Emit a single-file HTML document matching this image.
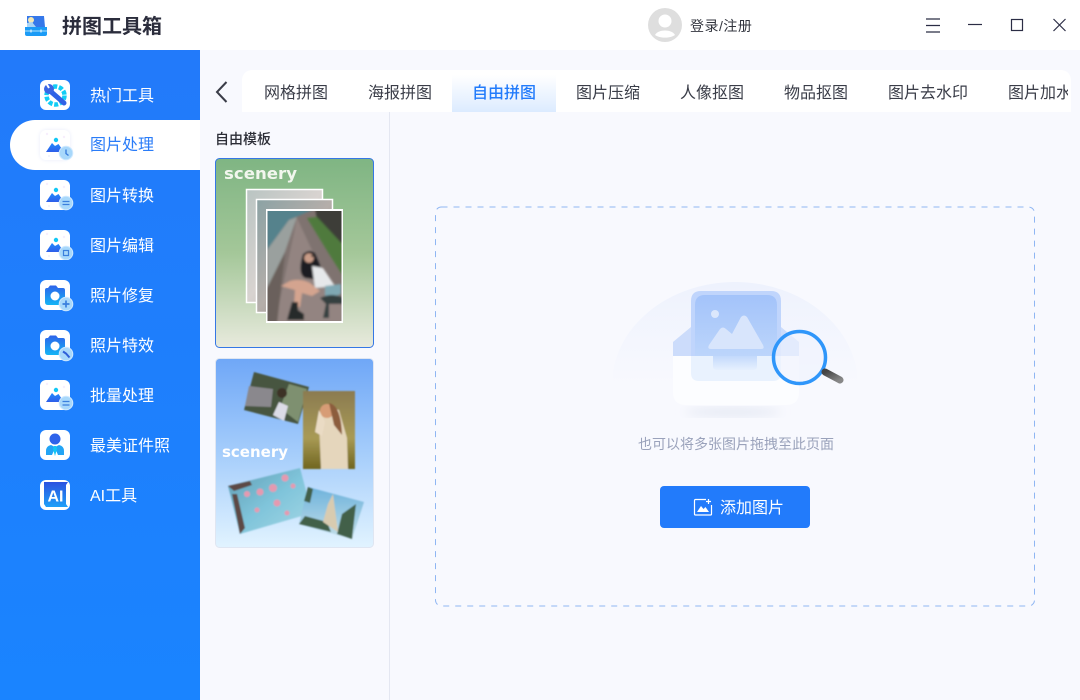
<!DOCTYPE html>
<html lang="zh"><head><meta charset="utf-8"><title>拼图工具箱</title>
<style>
*{box-sizing:border-box;margin:0;padding:0}
html,body{width:1080px;height:700px;overflow:hidden;background:#f8f9fe;font-family:"Liberation Sans","Noto Sans CJK SC",sans-serif}
.a{position:absolute}
.t{position:absolute;white-space:nowrap;line-height:24px}
#hd{left:0;top:0;width:1080px;height:50px;background:#fff}
#sb{left:0;top:50px;width:200px;height:650px;background:linear-gradient(#227afa,#1a84ff)}
#pill{left:10px;top:120px;width:190px;height:50px;background:#fff;border-radius:25px 0 0 25px}
.i{position:absolute;left:40px;width:30px;height:30px;background:#fff;border-radius:6px}
.n{position:absolute;left:90px;font-size:16px;line-height:24px;color:#fff;white-space:nowrap}
#tabs{left:242px;top:70px;width:829px;height:42px;background:#fff;border-radius:10px 10px 0 0;overflow:hidden}
#act{left:210px;top:5px;width:104px;height:37px;background:linear-gradient(#fff,#dcebff)}
.tb{position:absolute;top:12px;font-size:16px;line-height:24px;color:#3a3d48;white-space:nowrap}
#btn{left:660px;top:486px;width:150px;height:42px;background:#227bfb;border-radius:4px}
</style></head><body>
<div class="a" id="hd"></div>
<svg class="a" style="left:24px;top:15px" width="24" height="22" viewBox="0 0 24 22">
<path d="M3 1h17l1 11H3z" fill="#3578ea"/><circle cx="7" cy="5" r="3" fill="#f4e8b4"/><path d="M3 12V8l5-1 4 5z" fill="#a9d4f5"/>
<path d="M1 12h22v7q0 2-2 2H3q-2 0-2-2z" fill="#1b9bf6"/><path d="M1 16h22" stroke="#8fd4fb" stroke-width="1.200"/><path d="M7 14.500v3M17 14.500v3" stroke="#fff"/></svg>
<div class="t" style="left:62px;top:15px;font-size:20px;font-weight:700;color:#2b2d3c">拼图工具箱</div>
<svg class="a" style="left:648px;top:8px" width="34" height="34" viewBox="0 0 34 34"><circle cx="17" cy="17" r="17" fill="#dedede"/><circle cx="17" cy="13" r="6.500" fill="#fff"/><path d="M7 27c3-6 17-6 20 0-5 3.500-15 3.500-20 0z" fill="#fff"/></svg>
<div class="t" style="left:690px;top:14px;font-size:14px;letter-spacing:.5px;color:#33363f">登录/注册</div>
<svg class="a" style="left:920px;top:14px" width="150" height="24" viewBox="0 0 150 24" fill="none" stroke="#2b2d45" stroke-width="1.200">
<path d="M6 5h14M6 11.500h14M6 18h14"/><path d="M48 10.500h14"/><rect x="91.500" y="5.500" width="11" height="11"/><path d="M133.500 5l12 12M145.500 5l-12 12"/></svg>

<div class="a" id="sb"></div>
<div class="a" id="pill"></div>
<!-- icons -->
<div class="i" style="top:80px"></div>
<svg class="a" style="left:40px;top:80px" width="30" height="30" viewBox="0 0 30 30"><circle cx="15.500" cy="15.500" r="9" fill="none" stroke="#12cdf5" stroke-width="4.500" stroke-dasharray="4 1.700"/><path d="M9 10l15 13" stroke="#2f62e6" stroke-width="5" stroke-linecap="round"/><circle cx="9" cy="9" r="5" fill="#3a66e4"/><path d="M6 3l3 5" stroke="#fff" stroke-width="2"/></svg>

<div class="i" style="top:130px;box-shadow:0 0 4px #e8ecfa"></div>
<div class="i" style="top:180px"></div>
<div class="i" style="top:230px"></div>
<svg class="a" style="left:40px;top:130px" width="34" height="130" viewBox="0 0 34 130">
<defs><linearGradient id="m" x1="0" y1="0" x2="0" y2="1"><stop offset="0" stop-color="#1f8bff"/><stop offset="1" stop-color="#2e5ee8"/></linearGradient>
<g id="mt"><circle cx="7" cy="4" r="1.200" fill="#f7eefc"/><circle cx="24" cy="7" r="1.200" fill="#f7eefc"/><circle cx="9" cy="26" r="1" fill="#eef0fc"/><circle cx="16" cy="10" r="2.200" fill="#12c8f5"/><path d="M6 22l6-9 3 3 3.500-2L24 22z" fill="url(#m)"/></g>
<g id="bd"><circle cx="26" cy="23" r="6.800" fill="#a8d8fb" stroke="#cfe9ff"/></g></defs>
<use href="#mt"/><use href="#bd"/><path d="M26 19.500v4l2.500 2" stroke="#3b7fdd" stroke-width="1.400" fill="none"/>
<g transform="translate(0,50)"><use href="#mt"/><use href="#bd"/><path d="M22.500 21.500h7M29.500 24.500h-7" stroke="#3b7fdd" stroke-width="1.200"/></g>
<g transform="translate(0,100)"><use href="#mt"/><use href="#bd"/><rect x="23.500" y="20.500" width="5" height="5" fill="none" stroke="#3b7fdd" stroke-width="1.200"/></g>
</svg>
<div class="i" style="top:280px"></div>
<div class="i" style="top:330px"></div>
<svg class="a" style="left:40px;top:280px" width="34" height="85" viewBox="0 0 34 85">
<defs><linearGradient id="c" x1="0" y1="0" x2="0" y2="1"><stop offset="0" stop-color="#2e63ea"/><stop offset="1" stop-color="#14b4f5"/></linearGradient></defs>
<path d="M5 10q0-2 2-2h1l2-2.500h6l2 2.500h5q2 0 2 2v12q0 3-3 3H8q-3 0-3-3z" fill="url(#c)"/><circle cx="15" cy="16" r="4.500" fill="#fff"/><circle cx="26" cy="24" r="6.800" fill="#a8d8fb" stroke="#cfe9ff"/><path d="M26 20.500v7M22.500 24h7" stroke="#3b7fdd" stroke-width="1.700"/>
<g transform="translate(0,50)"><path d="M5 10q0-2 2-2h1l2-2.500h6l2 2.500h5q2 0 2 2v12q0 3-3 3H8q-3 0-3-3z" fill="url(#c)"/><circle cx="15" cy="16" r="4.500" fill="#fff"/><circle cx="26" cy="24" r="6.800" fill="#a8d8fb" stroke="#cfe9ff"/><path d="M23 21.500l3 2 3.500 4" stroke="#2f5fd8" stroke-width="2" fill="none"/></g>
</svg>
<div class="i" style="top:380px"></div>
<svg class="a" style="left:40px;top:380px" width="34" height="34" viewBox="0 0 34 34"><circle cx="7" cy="4" r="1.200" fill="#f7eefc"/><circle cx="24" cy="7" r="1.200" fill="#f7eefc"/><circle cx="16" cy="10" r="2.200" fill="#12c8f5"/><path d="M6 22l6-9 3 3 3.500-2L24 22z" fill="url(#m)"/><circle cx="26" cy="23" r="6.800" fill="#a8d8fb" stroke="#cfe9ff"/><path d="M22.500 21.500h7M22.500 25h7" stroke="#3b7fdd" stroke-width="1.200"/></svg>
<div class="i" style="top:430px"></div>
<svg class="a" style="left:40px;top:430px" width="30" height="30" viewBox="0 0 30 30"><circle cx="15" cy="9" r="5.500" fill="#2e63ea"/><path d="M6 25v-4q0-5 5-6l4 2 4-2q5 1 5 6v4h-6l-3-7-3 7z" fill="#22a4f5"/><path d="M14 16h2l1 3-2 7-2-7z" fill="#12c8f5"/></svg>
<div class="i" style="top:480px"></div>
<svg class="a" style="left:40px;top:480px" width="30" height="30" viewBox="0 0 30 30"><defs><linearGradient id="ai" x1="0" y1="0" x2="0" y2="1"><stop offset="0" stop-color="#2b52e0"/><stop offset="1" stop-color="#1fa0f8"/></linearGradient></defs><path d="M4 2h24l-2 3v19l2 3H6l-2-3z" fill="url(#ai)"/><text x="15.500" y="21.700" text-anchor="middle" font-size="16" font-weight="700" fill="#fff" font-family="Liberation Sans">AI</text></svg>

<div class="n" style="top:85px">热门工具</div>
<div class="n" style="top:134px;color:#2a7cf8">图片处理</div>
<div class="n" style="top:185px">图片转换</div>
<div class="n" style="top:235px">图片编辑</div>
<div class="n" style="top:285px">照片修复</div>
<div class="n" style="top:335px">照片特效</div>
<div class="n" style="top:385px">批量处理</div>
<div class="n" style="top:435px">最美证件照</div>
<div class="n" style="top:485px">AI工具</div>

<!-- tabs -->
<svg class="a" style="left:212px;top:80px" width="20" height="24" viewBox="0 0 20 24"><path d="M14.500 2L5 12l9.500 10" fill="none" stroke="#3a3d48" stroke-width="2"/></svg>
<div class="a" id="tabs"><div class="a" id="act"></div>
<div class="tb" style="left:22px">网格拼图</div><div class="tb" style="left:126px">海报拼图</div>
<div class="tb" style="left:230px;color:#227bfb;font-weight:500">自由拼图</div><div class="tb" style="left:334px">图片压缩</div>
<div class="tb" style="left:438px">人像抠图</div><div class="tb" style="left:542px">物品抠图</div>
<div class="tb" style="left:646px">图片去水印</div><div class="tb" style="left:766px;width:60px;overflow:hidden">图片加水印</div></div>
<div class="a" style="left:389px;top:112px;width:1px;height:588px;background:#e4e7f1"></div>
<div class="t" style="left:215px;top:127px;font-size:14px;font-weight:500;color:#2b2d36">自由模板</div>

<!-- card 1 -->
<svg class="a" style="left:215px;top:158px" width="159" height="190" viewBox="0 0 159 190">
<defs><linearGradient id="g" x1="0" y1="0" x2="0" y2="1"><stop offset="0" stop-color="#7fb583"/><stop offset=".5" stop-color="#a4c799"/><stop offset="1" stop-color="#e8eadd"/></linearGradient>
<linearGradient id="bk" x1="0" y1="0" x2="1" y2="1"><stop offset="0" stop-color="#b9c4c2"/><stop offset=".5" stop-color="#d8d3d0"/><stop offset="1" stop-color="#b8b3b0"/></linearGradient>
<linearGradient id="bk2" x1="0" y1="0" x2="1" y2="1"><stop offset="0" stop-color="#8ba2a4"/><stop offset=".5" stop-color="#b5aeaa"/><stop offset="1" stop-color="#8d8785"/></linearGradient>
<filter id="b1"><feGaussianBlur stdDeviation="1"/></filter><clipPath id="pc"><rect x="52.500" y="53" width="74" height="110"/></clipPath></defs>
<rect x=".5" y=".5" width="158" height="189" rx="4" fill="url(#g)" stroke="#3577e5"/>
<text x="9" y="21" font-size="16" font-weight="700" fill="#f2f6ee" font-family="DejaVu Sans" textLength="73" lengthAdjust="spacingAndGlyphs">scenery</text>
<rect x="31.500" y="31.500" width="76" height="113" fill="url(#bk)" stroke="#fff" stroke-width="1.500"/>
<rect x="41.500" y="41.500" width="76" height="113" fill="url(#bk2)" stroke="#fff" stroke-width="1.500"/>
<rect x="51" y="51" width="77" height="114" fill="#fff"/>
<g clip-path="url(#pc)"><rect x="52" y="53" width="75" height="110" fill="#7f7370"/>
<g filter="url(#b1)">
<path d="M52 50h50L74 62 52 92z" fill="#55828c"/><path d="M52 92l22-30 8-3-12 35-18 40z" fill="#9aa09e"/>
<path d="M100 50h30v34l-10 4-18-26z" fill="#3c3e38"/><path d="M92 60l10-1 28 30v32l-16-25z" fill="#4f7a3d"/>
<path d="M82 60l14 30 32 60v16H60z" fill="#938481"/><path d="M50 134l20-40-8 72H50z" fill="#6b605c"/>
<path d="M90 120q-8-4-2-24 8-6 12 0l8 18-4 8z" fill="#1c1b22"/><circle cx="94" cy="100" r="4.800" fill="#c99c88"/><path d="M96 98h5" stroke="#222" stroke-width="1.500"/>
<path d="M97 108l11 2 12 18-20 2z" fill="#e6e8ea"/><path d="M75 123q10-3 20 2l10 8-8 5-10-3-2 14h-6l1-17-14-4z" fill="#d4a48f"/>
<path d="M110 128l16-2v10l-16 6z" fill="#7fa8b3"/><path d="M105 140q12-6 23 0v6h-14v14h-6l3-14z" fill="#35403f"/>
<path d="M77 144h6v8l6 4v6H72z" fill="#262a2a"/></g></g>
</svg>

<!-- card 2 -->
<svg class="a" style="left:215px;top:358px" width="159" height="190" viewBox="0 0 159 190">
<defs><linearGradient id="bg" x1="0" y1="0" x2="0" y2="1"><stop offset="0" stop-color="#6fa7f7"/><stop offset=".5" stop-color="#a5cdfb"/><stop offset="1" stop-color="#e1f3ff"/></linearGradient>
<linearGradient id="p2" x1="0" y1="0" x2="0" y2="1"><stop offset="0" stop-color="#8b7b50"/><stop offset=".6" stop-color="#a89a55"/><stop offset="1" stop-color="#70651f"/></linearGradient>
<linearGradient id="p3" x1="0" y1="0" x2="1" y2="1"><stop offset="0" stop-color="#5f9cb3"/><stop offset=".5" stop-color="#7fc4da"/><stop offset="1" stop-color="#a5d8e6"/></linearGradient>
<linearGradient id="p4" x1="0" y1="0" x2="0" y2="1"><stop offset="0" stop-color="#6db2dc"/><stop offset="1" stop-color="#c3dfe8"/></linearGradient>
<filter id="b2"><feGaussianBlur stdDeviation=".8"/></filter></defs>
<rect x=".5" y=".5" width="158" height="189" rx="4" fill="url(#bg)" stroke="#dfe6f2"/>
<g filter="url(#b2)">
<path d="M39 14l55 15-11 37-54-14z" fill="#46553f"/><path d="M34 28l24 3-2 18-26-1z" fill="#8a888d"/><path d="M65 50l9-24 18 5-9 33z" fill="#7e9070"/><path d="M58 57l6-13 9 4-4 15z" fill="#dcdce6"/><circle cx="67" cy="35" r="5" fill="#3e3328"/>
<rect x="88" y="33" width="52" height="78" fill="url(#p2)"/><path d="M104 64q6-18 20-12l8 28 1 31H106z" fill="#e5d6bc"/><circle cx="112" cy="53" r="7" fill="#d79c76"/><path d="M114 45q12 2 13 32l-8-10z" fill="#8c5d3c"/><path d="M100 74l4-22 6 12-3 14z" fill="#eadbc4"/>
<path d="M13 128l72-18 12 45-72 21z" fill="url(#p3)"/><path d="M13 128l22-5 2 4-18 6zM17 136l5 0 8 34-5 6z" fill="#5d4a45"/>
<g fill="#e49ab0"><circle cx="45" cy="134" r="3.500"/><circle cx="58" cy="130" r="4"/><circle cx="70" cy="120" r="3.500"/><circle cx="32" cy="136" r="3"/><circle cx="62" cy="145" r="3.500"/><circle cx="78" cy="128" r="2.500"/><circle cx="42" cy="152" r="2.500"/><circle cx="72" cy="155" r="2.500"/></g>
<path d="M93 129l56 15-12 37-53-15z" fill="url(#p4)"/><path d="M93 129l5 2-3 14-6-2zM84 166l6-8 22 6 4 10zM122 176l5-20 14-10-4 35z" fill="#43604a"/><path d="M108 164l5-18 5-10 5 38z" fill="#d8cbb0"/></g>
<text x="7" y="99" font-size="15" font-weight="700" fill="#fff" font-family="DejaVu Sans" textLength="66" lengthAdjust="spacingAndGlyphs">scenery</text>
</svg>

<!-- dashed -->
<svg class="a" style="left:434px;top:206px" width="602" height="401"><rect x="1.500" y="1" width="599" height="399" rx="6" fill="none" stroke="#8fb6f3" stroke-dasharray="6 6"/></svg>

<!-- illustration -->
<svg class="a" style="left:600px;top:270px" width="270" height="160" viewBox="0 0 270 160">
<defs><linearGradient id="d" x1="0" y1="0" x2="0" y2="1"><stop offset="0" stop-color="#eef2fd"/><stop offset="1" stop-color="#f8f9fe"/></linearGradient>
<linearGradient id="card" x1="0" y1="0" x2="0" y2="1"><stop offset="0" stop-color="#a3c3fa"/><stop offset="1" stop-color="#bcd5fb"/></linearGradient>
<linearGradient id="low" x1="0" y1="0" x2="0" y2="1"><stop offset="0" stop-color="#c3d9fc"/><stop offset="1" stop-color="#e6f0fe"/></linearGradient>
<linearGradient id="h" x1="0" y1="0" x2="1" y2="1"><stop offset="0" stop-color="#444"/><stop offset="1" stop-color="#888"/></linearGradient>
<filter id="s"><feGaussianBlur stdDeviation="5"/></filter></defs>
<path d="M12 115a123 103 0 0 1 246 0z" fill="url(#d)"/>
<ellipse cx="133" cy="142" rx="48" ry="5" fill="#e6eaf4" filter="url(#s)"/>
<path d="M73 72L91 57h90l18 15v14H73z" fill="#ccdcfb"/>
<path d="M73 86h126v36q0 13-13 13H86q-13 0-13-13z" fill="#fcfdff"/>
<path d="M91 31q0-10 10-10h70q10 0 10 10v55H91z" fill="#c0d5fc"/>
<path d="M91 86h90v17q0 8-8 8H99q-8 0-8-8z" fill="#e9f2fe"/>
<path d="M95 35q0-10 10-10h62q10 0 10 10v51H95z" fill="url(#card)"/>
<path d="M113 86h44v10q0 4-4 4h-36q-4 0-4-4z" fill="url(#low)"/>
<circle cx="115" cy="44" r="4" fill="#dbe7fc"/>
<path d="M109 75l11-16q3-3 6 0l6 5 9-17q3-3 6 0l16 28q2 4-2 4h-50q-4 0-2-4z" fill="#d8e5fc"/>
<circle cx="199.500" cy="87.500" r="26" fill="#eff3fd" fill-opacity=".65" stroke="#2f96fa" stroke-width="3.500"/>
<path d="M225 102l15 8" stroke="url(#h)" stroke-width="7" stroke-linecap="round"/>
</svg>

<div class="t" style="left:638px;top:432px;font-size:14px;color:#9aa2bb">也可以将多张图片拖拽至此页面</div>
<div class="a" id="btn"></div>
<svg class="a" style="left:693px;top:498px" width="20" height="18" viewBox="0 0 20 18"><path d="M13 1.500H2.500q-1 0-1 1V16q0 1 1 1h15q1 0 1-1V7" fill="none" stroke="#fff" stroke-width="1.200"/><path d="M4 14l4-6 2.500 3 2-2 3.500 5z" fill="#fff"/><path d="M15.500 1v5M13 3.500h5" stroke="#fff" stroke-width="1.200"/></svg>
<div class="t" style="left:720px;top:497px;font-size:16px;color:#fff">添加图片</div>
</body></html>
